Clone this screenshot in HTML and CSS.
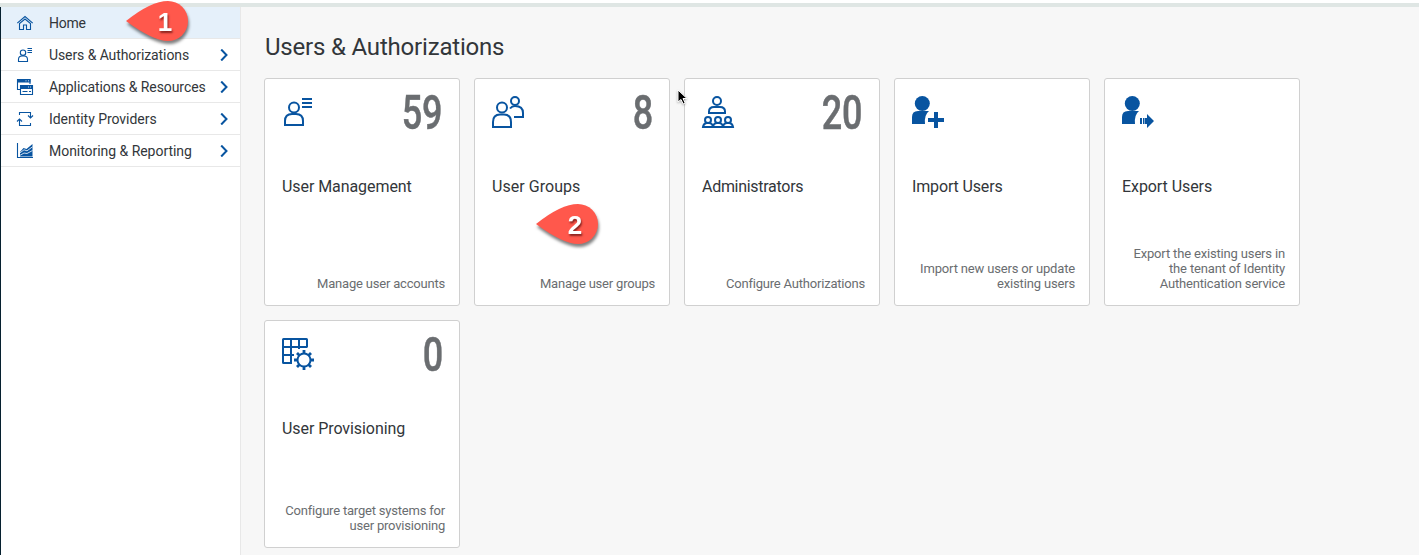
FILE: index.html
```html
<!DOCTYPE html>
<html lang="en">
<head>
<meta charset="utf-8">
<title>Users &amp; Authorizations</title>
<link rel="stylesheet" href="styles.css">
</head>
<body>
<div class="topbar"></div>
<div class="shell">
  <nav class="sidebar">
    <a class="item active">
      <svg class="nav-icon" viewBox="0 0 16 16"><path d="M.3 8.200 8 1.500l7.700 6.700M2.500 8.500v6h4v-4.500h3v4.500h4v-6L8 4z"/></svg>
      <span class="s-home">Home</span>
    </a>
    <a class="item">
      <svg class="nav-icon" viewBox="0 0 16 16"><circle cx="6" cy="5.700" r="2.700"/><path d="M1.500 14.500v-2q0-3.500 3.500-3.500h2q3.500 0 3.500 3.500v2zM10.500 1.500h4.500M10.500 3.500h4.500M10.500 5.500h4.500"/></svg>
      <span class="s-users">Users &amp; Authorizations</span>
      <svg class="chevron" viewBox="0 0 8 12"><path d="m1.200 .5 5.300 5.500-5.300 5.500"/></svg>
    </a>
    <a class="item">
      <svg class="nav-icon" viewBox="0 0 16 16"><path d="M3 10.500H.5V.5h12.500V5M3.500 6.500h12v9h-12z"/><path class="solid" d="M0 0h13.500v3.500H0zM3 6h13v4H3z"/><path class="light" d="M8.500 1.800h1M11 1.800h1M11 8h1M13 8h1"/><path d="M5.500 12.500h5M12 12.500h2"/></svg>
      <span class="s-apps">Applications &amp; Resources</span>
      <svg class="chevron" viewBox="0 0 8 12"><path d="m1.200 .5 5.300 5.500-5.300 5.500"/></svg>
    </a>
    <a class="item">
      <svg class="nav-icon" viewBox="0 0 16 16"><path d="M2.500 4V1.500h11V6M2.500 9v5.500h11V12"/><path d="m11 4.500 2.500 2.500L16 4.500M0 10.500 2.500 8 5 10.500"/></svg>
      <span class="s-idp">Identity Providers</span>
      <svg class="chevron" viewBox="0 0 8 12"><path d="m1.200 .5 5.300 5.500-5.300 5.500"/></svg>
    </a>
    <a class="item">
      <svg class="nav-icon" viewBox="0 0 16 16"><path d="M.5 0v14.500H16"/><path class="solid" d="M3 13.500V9l3.500-4 3 1L15.500 1v12.500z"/><path class="light" d="m3 9.800 4-3 3 1 5.500-4M3 12.300l4-2.300 3 .5 5.500-3"/></svg>
      <span class="s-mon">Monitoring &amp; Reporting</span>
      <svg class="chevron" viewBox="0 0 8 12"><path d="m1.200 .5 5.300 5.500-5.300 5.500"/></svg>
    </a>
  </nav>
  <main class="content">
    <h1>Users &amp; Authorizations</h1>
    <div class="tiles">
      <article class="tile">
        <div class="tile-top">
          <svg class="icon" viewBox="0 0 32 32"><circle cx="12" cy="11.500" r="5"/><path d="M3 29v-4q0-7 7-7h4q7 0 7 7v4z"/><path d="M20 3h10M20 7h10M20 11h10"/></svg>
          <span class="count">59</span>
        </div>
        <h2 class="t-mgmt">User Management</h2>
        <p class="d-mgmt">Manage user accounts</p>
      </article>
      <article class="tile">
        <div class="tile-top">
          <svg class="icon" viewBox="0 0 32 32"><circle cx="10" cy="11.500" r="5"/><path d="M1 31v-5q0-7.500 7-7.500h4q7 0 7 7.500v5z"/><circle cx="23" cy="5" r="4"/><path d="M18 12.500q2-2.500 5-2.500 8 0 8 7v4h-9"/></svg>
          <span class="count">8</span>
        </div>
        <h2 class="t-groups">User Groups</h2>
        <p class="d-groups">Manage user groups</p>
      </article>
      <article class="tile">
        <div class="tile-top">
          <svg class="icon" viewBox="0 0 32 32"><circle cx="15" cy="5" r="4"/><path d="M7 17v-1.500q0-4.500 5-4.500h6q5 0 5 4.500V17z"/><circle cx="6" cy="24" r="3"/><circle cx="16" cy="24" r="3"/><circle cx="26" cy="24" r="3"/><path d="M1 31q.5-3.500 3.500-4h3q3 .5 3.500 3.500.5-3 3.500-3.500h3q3 .5 3.500 3.500.5-3 3.500-3.500h3q3 .5 3.500 4z"/></svg>
          <span class="count">20</span>
        </div>
        <h2 class="t-admin">Administrators</h2>
        <p class="d-admin">Configure Authorizations</p>
      </article>
      <article class="tile">
        <div class="tile-top">
          <svg class="icon filled" viewBox="0 0 32 32"><circle cx="10.300" cy="7.500" r="7.500"/><path d="M0 28v-7q0-6 6-6h11q-5 4-4 13zM22 16h4v6h6v4h-6v6h-4v-6h-6v-4h6z"/></svg>
        </div>
        <h2 class="t-import">Import Users</h2>
        <p class="d-import">Import new users or update<br>existing users</p>
      </article>
      <article class="tile">
        <div class="tile-top">
          <svg class="icon filled" viewBox="0 0 32 32"><circle cx="10.300" cy="7.500" r="7.500"/><path d="M0 28v-7q0-6 6-6h11q-5 4-4 13zM18 22h2v6h-2zM21 22h1v6h-1zM22.500 22H25v-4l7 7-7 7v-4h-2.500z"/></svg>
        </div>
        <h2 class="t-export">Export Users</h2>
        <p class="d-export">Export the existing users in<br>the tenant of Identity<br>Authentication service</p>
      </article>
      <article class="tile">
        <div class="tile-top">
          <svg class="icon" viewBox="0 0 32 32"><path d="M25 9.500V1.500q0-.5-.5-.5h-23q-.5 0-.5.500v23q0 .5.500.500H9V1M17 1v10M1 9h24M1 17h11"/><circle cx="22" cy="22" r="6.500"/><path stroke-width="2.800" d="M22 12v3.500M22 28.500V32M12 22h3.500M28.500 22H32M15 15l2.500 2.500M26.500 26.500 29 29M15 29l2.500-2.500M26.500 17.500 29 15"/></svg>
          <span class="count">0</span>
        </div>
        <h2 class="t-prov">User Provisioning</h2>
        <p class="d-prov">Configure target systems for<br>user provisioning</p>
      </article>
    </div>
  </main>
</div>
<div class="pin pin-one"><svg viewBox="0 0 62 42"><path d="M-1 20Q24 0 41 0a20 20 0 0 1 0 40Q26 40-1 20z"/></svg><b>1</b></div>
<div class="pin pin-two"><svg viewBox="0 0 62 42"><path d="M-1 20Q24 0 41 0a20 20 0 0 1 0 40Q26 40-1 20z"/></svg><b>2</b></div>
<svg class="cursor" viewBox="0 0 12 18"><path d="M1 1v12l3-2.500L6.200 15l2-1L6 9.500h4z"/></svg>
</body>
</html>
```
FILE: styles.css
```css
* { box-sizing: border-box; }
body {
  margin: 0;
  height: 555px;
  overflow: hidden;
  position: relative;
  display: flex;
  flex-direction: column;
  background: #fff;
  color: #32363a;
  font-family: Roboto, "Liberation Sans", sans-serif;
}
.topbar { height: 7px; flex: none; border-top: 3px solid #fff; background: #dfe6e4; }
.shell { flex: 1; display: flex; min-height: 0; }
.sidebar { width: 241px; flex: none; border-left: 1px solid #06202f; border-right: 1px solid #e8e8e8; }
.item { display: flex; align-items: center; height: 32px; padding: 0 12px 0 16px; border-bottom: 1px solid #e8e8e8; font-size: 14px; letter-spacing: -.09px; white-space: nowrap; }
.item.active { background: #e5f0fa; }
.s-home { letter-spacing: -.25px; }
.s-idp, .s-mon { letter-spacing: -.04px; }
.nav-icon { width: 16px; height: 16px; margin-right: 16px; fill: none; stroke: #0854a0; stroke-width: 1.1; overflow: visible; }
.nav-icon .solid { fill: #0854a0; stroke: none; }
.nav-icon .light { stroke: #fff; stroke-width: .8; }
.chevron { width: 8px; height: 12px; margin-left: auto; fill: none; stroke: #0854a0; stroke-width: 2; }
.content { flex: 1; background: #f7f7f7; padding: 26px 0 0 23px; }
h1 { margin: 0 0 17px 1px; font-size: 24px; line-height: 28px; font-weight: 400; letter-spacing: -.19px; white-space: nowrap; }
.tiles { display: grid; grid-template-columns: repeat(5, 196px); grid-auto-rows: 228px; gap: 14px; }
.tile { display: flex; flex-direction: column; padding: 17px 14px 14px 17px; background: #fff; border: 1px solid #d0d0d0; border-radius: 3px; }
.tile-top { display: flex; justify-content: space-between; height: 79px; padding-right: 2px; }
.icon { width: 32px; height: 32px; fill: none; stroke: #0854a0; stroke-width: 2; overflow: visible; }
.icon.filled { fill: #0854a0; stroke: none; }
.count { font-size: 48px; line-height: 34px; height: 34px; font-weight: 500; color: #6a6d70; -webkit-text-stroke: .5px #6a6d70; transform: scaleX(.75); transform-origin: right; }
h2 { margin: 0; font-size: 16px; line-height: 24px; font-weight: 400; letter-spacing: -.07px; white-space: nowrap; }
.t-groups { letter-spacing: .05px; }
.t-admin { letter-spacing: -.29px; }
.t-import { letter-spacing: -.15px; }
.tile p { margin: auto 0 0; font-size: 13px; line-height: 15px; letter-spacing: -.2px; color: #6a6d70; text-align: right; white-space: nowrap; }
.tile .d-import, .tile .d-export { letter-spacing: -.16px; }
.pin { position: absolute; width: 62px; height: 42px; filter: drop-shadow(1px 3px 1.500px rgba(0, 0, 0, .5)); }
.pin svg { display: block; width: 62px; height: 42px; fill: #ff584c; overflow: visible; }
.pin b { position: absolute; left: 28px; top: 7px; width: 20px; text-align: center; font: 700 26px/29px "Liberation Sans", sans-serif; color: #fff; text-shadow: 1px 2px 2px rgba(60, 0, 0, .6); }
.pin-one { left: 127px; top: 1px; }
.pin-two { left: 537px; top: 204px; }
.cursor { position: absolute; left: 677px; top: 89px; width: 12px; height: 18px; stroke: #fff; stroke-width: 1; filter: drop-shadow(0 1px 1px rgba(0, 0, 0, .3)); }
```
